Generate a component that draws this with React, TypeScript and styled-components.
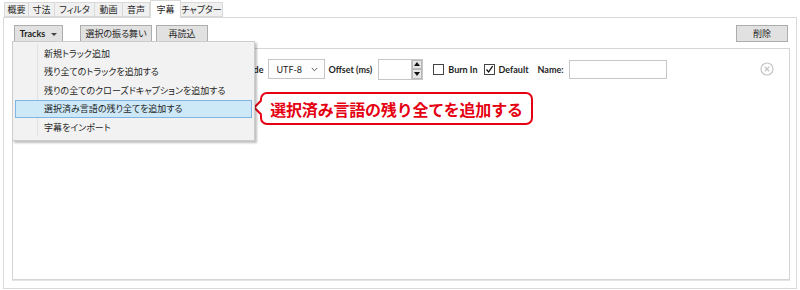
import React from 'react';
import styled, { createGlobalStyle } from 'styled-components';

const GlobalStyle = createGlobalStyle`
  html, body {
    margin: 0;
    padding: 0;
    background: #fff;
  }
  body {
    font-family: "Noto Sans CJK JP", "Lato", sans-serif;
    font-size: 9px;
    color: #1e1e1e;
  }
`;

const Page = styled.div`
  width: 800px;
  height: 290px;
  padding: 0 3px 1px 3px;
  box-sizing: border-box;
  display: flex;
  flex-direction: column;
`;

const TabStrip = styled.div`
  display: flex;
  align-items: flex-end;
  height: 17px;
  padding-left: 1px;
  position: relative;
  z-index: 2;
`;

const Tab = styled.div<{ $active?: boolean; $w: number }>`
  box-sizing: border-box;
  width: ${p => p.$w}px;
  height: ${p => (p.$active ? '18px' : '15px')};
  margin-bottom: ${p => (p.$active ? '-1px' : '0')};
  border: 1px solid #d9d9d9;
  border-left-width: ${p => (p.$active ? '1px' : '0')};
  border-right-width: ${p => (p.$active ? '1px' : '1px')};
  border-bottom: ${p => (p.$active ? 'none' : '1px solid #d9d9d9')};
  background: ${p => (p.$active ? '#fff' : '#f0f0f0')};
  display: flex;
  align-items: center;
  justify-content: center;
  font-size: 9px;
  font-feature-settings: "palt";
  line-height: 1;
  white-space: nowrap;
  &:first-child {
    border-left-width: 1px;
  }
`;

const Panel = styled.div`
  flex: 1;
  border: 1px solid #d9d9d9;
  padding: 7px 6px 8px 8px;
  display: flex;
  flex-direction: column;
  gap: 6px;
`;

const Toolbar = styled.div`
  display: flex;
  align-items: center;
  height: 17px;
  padding: 0 2px;
`;

const TracksWrap = styled.div`
  position: relative;
  z-index: 5;
`;

const Button = styled.div<{ $gap?: number; $width?: number }>`
  box-sizing: border-box;
  height: 17px;
  width: ${p => (p.$width ? `${p.$width}px` : 'auto')};
  margin-left: ${p => p.$gap ?? 0}px;
  padding: 0 5px;
  background: #e1e1e1;
  border: 1px solid #adadad;
  display: flex;
  align-items: center;
  justify-content: center;
  gap: 6px;
  font-size: 9px;
  font-feature-settings: "palt";
  white-space: nowrap;
`;

const LatinBold = styled.span`
  font-family: "Lato", "Liberation Sans", sans-serif;
  font-weight: 700;
  font-size: 9px;
`;

const Caret = styled.span`
  width: 0;
  height: 0;
  border-left: 3px solid transparent;
  border-right: 3px solid transparent;
  border-top: 3px solid #444;
  margin-top: 1px;
`;

const Spacer = styled.div`
  flex: 1;
`;

const Menu = styled.div`
  position: absolute;
  left: -2px;
  top: 16px;
  width: 243px;
  box-sizing: border-box;
  padding: 2px 2px 3px 2px;
  background: #f2f2f2;
  border: 1px solid #cccccc;
  box-shadow: 2px 2px 2px rgba(0, 0, 0, 0.25);
  &::before {
    content: '';
    position: absolute;
    left: 24px;
    top: 2px;
    bottom: 3px;
    width: 1px;
    background: #e2e2e2;
  }
`;

const MenuItem = styled.div<{ $hover?: boolean }>`
  position: relative;
  box-sizing: border-box;
  height: 18.5px;
  padding-left: 28px;
  display: flex;
  align-items: center;
  font-size: 9px;
  font-feature-settings: "palt";
  white-space: nowrap;
  background: ${p => (p.$hover ? '#cde8f7' : 'transparent')};
  border: 1px solid ${p => (p.$hover ? '#7fb4e3' : 'transparent')};
`;

const ListPanel = styled.div`
  flex: 1;
  position: relative;
  background: #fff;
  border: 1px solid #d5d5d5;
  box-shadow: 0 1px 0 #e4e4e4;
  padding: 10px 15px 0 8px;
`;

const TrackRow = styled.div`
  display: flex;
  align-items: center;
  height: 20px;
`;

const Label = styled.span<{ $gap?: number }>`
  margin-left: ${p => p.$gap ?? 0}px;
  font-family: "Lato", "Liberation Sans", sans-serif;
  font-weight: 700;
  font-size: 9px;
  white-space: nowrap;
`;

const Combo = styled.div<{ $width: number; $gap?: number }>`
  box-sizing: border-box;
  width: ${p => p.$width}px;
  height: 20px;
  margin-left: ${p => p.$gap ?? 0}px;
  border: 1px solid #c6c6c6;
  background: #fdfdfd;
  display: flex;
  align-items: center;
  justify-content: space-between;
  padding: 0 6px 0 8px;
  font-family: "Lato", "Liberation Sans", sans-serif;
  font-size: 9px;
`;

const TextBox = styled.div<{ $width: number; $gap?: number }>`
  box-sizing: border-box;
  width: ${p => p.$width}px;
  height: 19px;
  margin-left: ${p => p.$gap ?? 0}px;
  border: 1px solid #c6c6c6;
  background: #fff;
`;

const Spin = styled.div<{ $gap?: number }>`
  display: flex;
  height: 21px;
  margin-left: ${p => p.$gap ?? 0}px;
`;

const SpinInput = styled.div`
  box-sizing: border-box;
  width: 33px;
  height: 21px;
  border: 1px solid #c6c6c6;
  border-right: none;
`;

const SpinArrows = styled.div`
  box-sizing: border-box;
  width: 12px;
  border: 1px solid #c6c6c6;
  display: flex;
  flex-direction: column;
`;

const SpinButton = styled.div<{ $up?: boolean }>`
  flex: 1;
  background: #e6e6e6;
  border: 1px solid #b8b8b8;
  display: flex;
  align-items: center;
  justify-content: center;
  &::after {
    content: '';
    border-left: 3px solid transparent;
    border-right: 3px solid transparent;
    ${p => (p.$up ? 'border-bottom: 4px solid #111;' : 'border-top: 4px solid #111;')}
  }
`;

const Check = styled.div<{ $gap?: number }>`
  box-sizing: border-box;
  width: 11px;
  height: 11px;
  margin-left: ${p => p.$gap ?? 0}px;
  border: 1px solid #444;
  background: #fff;
  display: flex;
  align-items: center;
  justify-content: center;
`;

const CloseIcon = styled.div`
  margin-left: auto;
  display: flex;
`;

const Callout = styled.div`
  position: absolute;
  left: 247px;
  top: 43px;
  width: 273px;
  height: 33px;
  box-sizing: border-box;
  border: 2px solid #e50012;
  border-radius: 7px;
  background: #fff;
  display: flex;
  align-items: center;
  justify-content: center;
  font-family: "Noto Sans CJK JP", sans-serif;
  font-weight: 700;
  font-size: 16px;
  color: #e50012;
  letter-spacing: -0.2px;
  &::before {
    content: '';
    position: absolute;
    left: -7px;
    top: 7.5px;
    width: 11px;
    height: 11px;
    box-sizing: border-box;
    background: #fff;
    border-left: 2px solid #e50012;
    border-bottom: 2px solid #e50012;
    transform: rotate(45deg);
  }
`;

const tabs = [
  { label: '概要', w: 25 },
  { label: '寸法', w: 26 },
  { label: 'フィルタ', w: 40 },
  { label: '動画', w: 28 },
  { label: '音声', w: 27 },
  { label: '字幕', w: 31 },
  { label: 'チャプター', w: 42 },
];

const menuItems = [
  '新規トラック追加',
  '残り全てのトラックを追加する',
  '残りの全てのクローズドキャプションを追加する',
  '選択済み言語の残り全てを追加する',
  '字幕をインポート',
];

const Chevron = () => (
  <svg width="7" height="5" viewBox="0 0 7 5">
    <path d="M0.8 1 L3.5 3.7 L6.2 1" fill="none" stroke="#555" strokeWidth="1" />
  </svg>
);

const App: React.FC = () => {
  return (
    <>
      <GlobalStyle />
      <Page>
        <TabStrip>
          {tabs.map(t => (
            <Tab key={t.label} $w={t.w} $active={t.label === '字幕'}>{t.label}</Tab>
          ))}
        </TabStrip>
        <Panel>
          <Toolbar>
            <TracksWrap>
              <Button $width={49}>
                <LatinBold>Tracks</LatinBold>
                <Caret />
              </Button>
              <Menu>
                {menuItems.map((m, i) => (
                  <MenuItem key={m} $hover={i === 3}>{m}</MenuItem>
                ))}
              </Menu>
            </TracksWrap>
            <Button $gap={17} $width={72}>選択の振る舞い</Button>
            <Button $gap={4} $width={52}>再読込</Button>
            <Spacer />
            <Button $width={52}>削除</Button>
          </Toolbar>
          <ListPanel>
            <TrackRow>
              <Combo $width={150}>
                <span />
                <Chevron />
              </Combo>
              <Label $gap={63}>Encode</Label>
              <Combo $width={57} $gap={4}>
                <span>UTF-8</span>
                <Chevron />
              </Combo>
              <Label $gap={4}>Offset (ms)</Label>
              <Spin $gap={6}>
                <SpinInput />
                <SpinArrows>
                  <SpinButton $up />
                  <SpinButton />
                </SpinArrows>
              </Spin>
              <Check $gap={10} />
              <Label $gap={4}>Burn In</Label>
              <Check $gap={6}>
                <svg width="9" height="9" viewBox="0 0 9 9">
                  <path d="M1.5 4.5 L3.6 7 L7.6 1.2" fill="none" stroke="#111" strokeWidth="1.3" />
                </svg>
              </Check>
              <Label $gap={4}>Default</Label>
              <Label $gap={9}>Name:</Label>
              <TextBox $width={98} $gap={5} />
              <CloseIcon>
                <svg width="14" height="14" viewBox="0 0 14 14">
                  <circle cx="7" cy="7" r="6" fill="none" stroke="#c4c4c4" strokeWidth="1.2" />
                  <path d="M4.8 4.8 L9.2 9.2 M9.2 4.8 L4.8 9.2" stroke="#c4c4c4" strokeWidth="1.3" />
                </svg>
              </CloseIcon>
            </TrackRow>
            <Callout>選択済み言語の残り全てを追加する</Callout>
          </ListPanel>
        </Panel>
      </Page>
    </>
  );
};

export default App;
